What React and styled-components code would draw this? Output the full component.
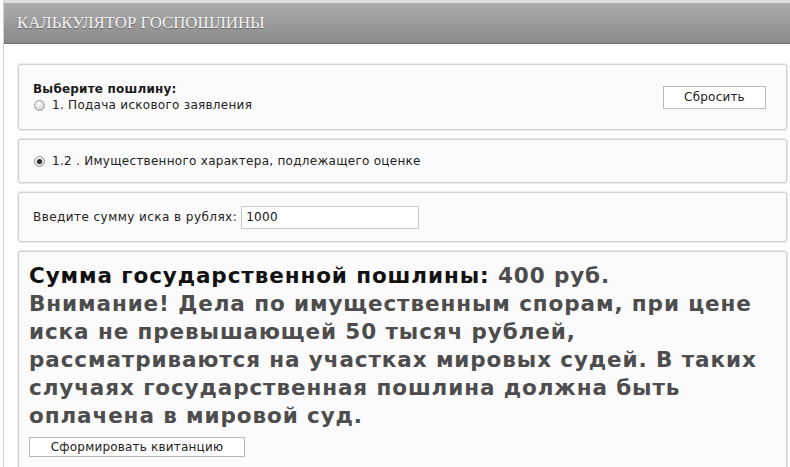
import React, { useState } from "react";
import styled, { createGlobalStyle } from "styled-components";

const Global = createGlobalStyle`
  html, body { margin: 0; padding: 0; background: #fff; }
  body { font-family: "DejaVu Sans", Verdana, sans-serif; color: #1a1a1a; }
  * { box-sizing: border-box; }
`;

const Frame = styled.div`
  margin-left: 3px;
  border-left: 1px solid #cfcfcf;
  border-top: 3px solid #dedede;
  min-height: 467px;
`;

const Header = styled.div`
  height: 41px;
  display: flex;
  align-items: center;
  padding-left: 13px;
  background: linear-gradient(#adadad, #8a8a8a);
  border-bottom: 1px solid #6f6f6f;
  font-family: "Liberation Serif", "Times New Roman", serif;
  font-size: 16.8px;
  color: #f4f4f4;
  text-shadow: 0 1px 1px rgba(0, 0, 0, 0.35);
`;

const Content = styled.div`
  padding: 20px 3px 0 14px;
  display: flex;
  flex-direction: column;
  gap: 9px;
`;

const Panel = styled.div`
  display: flex;
  align-items: ${(p) => (p.$column ? "flex-start" : "center")};
  flex-direction: ${(p) => (p.$column ? "column" : "row")};
  justify-content: space-between;
  min-height: ${(p) => p.$h || 0}px;
  padding: ${(p) => p.$pad || "0 20px 0 14px"};
  background: #fbfbfb;
  border: 1px solid #d0d0d0;
  border-radius: 3px;
  box-shadow: 0 0 0 1px #ebebeb;
`;

const Group = styled.div`
  display: flex;
  flex-direction: column;
  gap: 2px;
`;

const Label = styled.div`
  font-size: 12px;
  font-weight: bold;
  letter-spacing: 0.2px;
  color: #1a1a1a;
`;

const RadioRow = styled.label`
  display: flex;
  align-items: center;
  font-size: 12px;
  letter-spacing: 0.28px;
  color: #222;
  cursor: pointer;
`;

const Radio = styled.input.attrs({ type: "radio" })`
  appearance: none;
  width: 11px;
  height: 11px;
  margin: 0 7px 0 1px;
  border-radius: 50%;
  border: 1px solid #9a9a9a;
  background: radial-gradient(circle at 40% 35%, #ffffff, #d4d4d4 70%, #bdbdbd);
  position: relative;
  flex: none;
  &:checked::after {
    content: "";
    position: absolute;
    left: 2px;
    top: 2px;
    width: 5px;
    height: 5px;
    border-radius: 50%;
    background: #2a2a2a;
  }
`;

const Button = styled.button`
  width: ${(p) => p.$w}px;
  height: ${(p) => p.$h}px;
  margin-top: ${(p) => p.$mt || 0}px;
  background: #fff;
  border: 1px solid #b9b9b9;
  font-family: "DejaVu Sans", Verdana, sans-serif;
  font-size: 12px;
  letter-spacing: 0.2px;
  color: #222;
  padding: 0;
  cursor: pointer;
  flex: none;
`;

const Field = styled.label`
  display: flex;
  align-items: center;
  gap: 4px;
  font-size: 12px;
  letter-spacing: 0.45px;
  color: #222;
`;

const Input = styled.input`
  width: 178px;
  height: 23px;
  border: 1px solid #c8c8c8;
  background: #fff;
  padding: 0 4px;
  font-family: "DejaVu Sans", Verdana, sans-serif;
  font-size: 12px;
  letter-spacing: 0.28px;
  color: #111;
  outline: none;
`;

const Result = styled.div`
  font-size: 21.5px;
  font-weight: bold;
  letter-spacing: 0.9px;
  line-height: 28px;
  color: #4d4d4d;
`;

const Strong = styled.span`
  color: #111;
`;

export default function App() {
  const [sum, setSum] = useState("1000");
  return (
    <>
      <Global />
      <Frame>
        <Header>КАЛЬКУЛЯТОР ГОСПОШЛИНЫ</Header>
        <Content>
          <Panel $h={66}>
            <Group>
              <Label>Выберите пошлину:</Label>
              <RadioRow>
                <Radio name="a" />
                1. Подача искового заявления
              </RadioRow>
            </Group>
            <Button $w={103} $h={23}>Сбросить</Button>
          </Panel>
          <Panel $h={44}>
            <RadioRow>
              <Radio name="b" defaultChecked />
              1.2 . Имущественного характера, подлежащего оценке
            </RadioRow>
          </Panel>
          <Panel $h={50}>
            <Field>
              Введите сумму иска в рублях:
              <Input value={sum} onChange={(e) => setSum(e.target.value)} />
            </Field>
          </Panel>
          <Panel $column $pad="10px 10px 12px 10px">
            <Result>
              <Strong>Сумма государственной пошлины:</Strong> 400 руб.
              <br />
              Внимание! Дела по имущественным спорам, при цене
              <br />
              иска не превышающей 50 тысяч рублей,
              <br />
              рассматриваются на участках мировых судей. В таких
              <br />
              случаях государственная пошлина должна быть
              <br />
              оплачена в мировой суд.
            </Result>
            <Button $w={216} $h={20} $mt={7}>
              Сформировать квитанцию
            </Button>
          </Panel>
        </Content>
      </Frame>
    </>
  );
}
